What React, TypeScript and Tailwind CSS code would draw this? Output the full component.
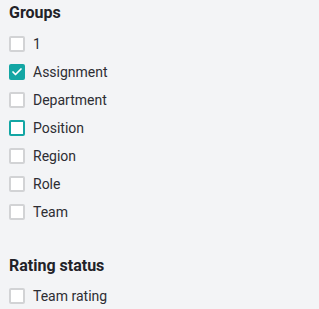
import { Check } from "lucide-react"

const groups = [
  { label: "1" },
  { label: "Assignment", checked: true },
  { label: "Department" },
  { label: "Position", focused: true },
  { label: "Region" },
  { label: "Role" },
  { label: "Team" },
]

function Box({ checked, focused }: { checked?: boolean; focused?: boolean }) {
  if (checked) {
    return (
      <span className="flex size-4 items-center justify-center rounded-[2px] bg-[#13a6a4]">
        <Check className="size-3 text-white" strokeWidth={3.5} />
      </span>
    )
  }
  return (
    <span
      className={
        focused
          ? "size-4 rounded-[2px] border-2 border-[#13a6a4] bg-white"
          : "size-4 rounded-[2px] border-2 border-[#d2d3d5] bg-white"
      }
    />
  )
}

function Row({ label, checked, focused }: { label: string; checked?: boolean; focused?: boolean }) {
  return (
    <label className="flex h-7 items-center gap-2">
      <Box checked={checked} focused={focused} />
      <span className="text-[14px] text-[#2d2d33]">{label}</span>
    </label>
  )
}

export default function App() {
  return (
    <div className="min-h-screen w-[319px] bg-[#f3f4f6] pl-[9px] pt-[3px] font-['Roboto',sans-serif]">
      {/* Groups */}
      <section>
        <h3 className="mb-[7px] h-5 text-[16px] font-bold leading-5 text-[#222228]">Groups</h3>
        {groups.map((g) => (
          <Row key={g.label} {...g} />
        ))}
      </section>

      {/* Rating status */}
      <section className="mt-[30px]">
        <h3 className="mb-[6px] h-5 text-[16px] font-bold leading-5 text-[#222228]">Rating status</h3>
        <Row label="Team rating" />
      </section>
    </div>
  )
}
